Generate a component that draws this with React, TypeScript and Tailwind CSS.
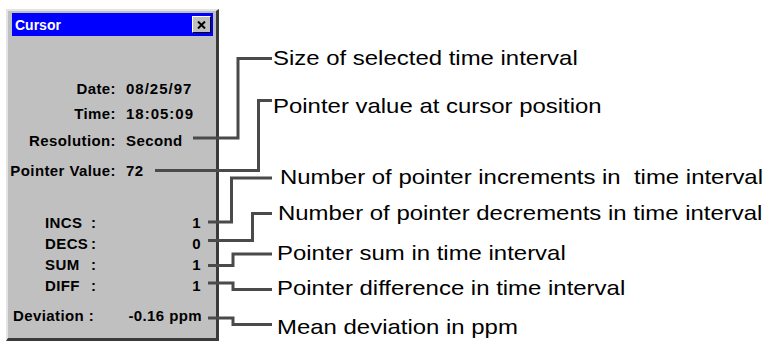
import React from "react";

const ui = { fontFamily: '"Liberation Sans", Arial, sans-serif' };

// connector lines from the window values to the callout texts (page coords)
const LEADERS = [
  "M193 138 H238 V58.5 H272",
  "M155 170.5 H258.5 V100.5 H272",
  "M208 222 H231.5 V178 H272",
  "M208 240.5 H252.5 V213.5 H272",
  "M208 265.5 H233 V254 H272",
  "M208 283 H233 V289.5 H272",
  "M208 318 H233 V324.5 H272",
];

const CALLOUTS = [
  { text: "Size of selected time interval", top: "mt-[48px]", left: "ml-[273px]" },
  { text: "Pointer value at cursor position", top: "mt-[28px]", left: "ml-[273px]" },
  { text: "Number of pointer increments in\u00a0 time interval", top: "mt-[51px]", left: "ml-[280px]" },
  { text: "Number of pointer decrements in time interval", top: "mt-[16px]", left: "ml-[278px]" },
  { text: "Pointer sum in time interval", top: "mt-[20px]", left: "ml-[277px]" },
  { text: "Pointer difference in time interval", top: "mt-[15px]", left: "ml-[277px]" },
  { text: "Mean deviation in ppm", top: "mt-[19px]", left: "ml-[277px]" },
];

const COUNTERS = [
  { label: "INCS", value: "1", top: "mt-[34px]" },
  { label: "DECS", value: "0", top: "mt-[3px]" },
  { label: "SUM", value: "1", top: "mt-[3px]" },
  { label: "DIFF", value: "1", top: "mt-[3px]" },
];

function CloseButton() {
  return (
    <div className="flex h-[17px] w-[19px] items-center justify-center border-t border-l border-t-white border-l-white border-r border-b border-r-black border-b-black bg-[#c0c0c0]">
      <svg width="9" height="8" viewBox="0 0 9 8">
        <path d="M1 0.5 L8 7.5 M8 0.5 L1 7.5" stroke="#000" strokeWidth="2" />
      </svg>
    </div>
  );
}

function CursorWindow() {
  return (
    <div className="ml-[6px] mt-[9px] flex h-[332px] w-[213px] flex-col border-t-2 border-l-2 border-t-[#e4e4e4] border-l-[#e4e4e4] border-r-[3px] border-b-[3px] border-r-[#3a3a3a] border-b-[#3a3a3a] bg-[#c0c0c0] pt-[2px] pl-[4px] pr-[3px]">
      {/* Title bar */}
      <div className="flex h-[23px] items-center justify-between bg-[#0000ff] pl-[3px] pr-[2px]">
        <span className="text-[14px] font-bold leading-none text-white">Cursor</span>
        <CloseButton />
      </div>

      <div className="flex flex-col text-[15px] font-bold leading-[18px] tracking-[0.4px] text-black">
        {/* Date / time block */}
        <div className="mt-[44px] grid grid-cols-[104px_1fr] gap-x-[10px] gap-y-[7px]">
          <span className="text-right">Date:</span>
          <span className="tracking-[1px]">08/25/97</span>
          <span className="text-right">Time:</span>
          <span className="tracking-[1px]">18:05:09</span>
          <span className="mt-[2px] text-right">Resolution:</span>
          <span className="mt-[2px]">Second</span>
          <span className="mt-[5px] -ml-[2px] whitespace-nowrap text-right">Pointer Value:</span>
          <span className="mt-[5px]">72</span>
        </div>

        {/* Counters */}
        {COUNTERS.map((c) => (
          <div key={c.label} className={`${c.top} flex pl-[33px] pr-[12px]`}>
            <span className="w-[46px]">{c.label}</span>
            <span>:</span>
            <span className="flex-1 text-right">{c.value}</span>
          </div>
        ))}

        <div className="mt-[12px] flex pl-[1px] pr-[11px]">
          <span>Deviation :</span>
          <span className="flex-1 text-right">-0.16 ppm</span>
        </div>
      </div>
    </div>
  );
}

export default function App() {
  return (
    <div className="relative flex h-[341px] w-[764px] overflow-hidden bg-white" style={ui}>
      <CursorWindow />

      <div className="absolute left-0 top-0 flex flex-col items-start text-[21px] leading-[20px] text-black">
        {CALLOUTS.map((c) => (
          <span key={c.text} className={`${c.top} ${c.left} origin-left scale-x-[1.14] whitespace-nowrap`}>
            {c.text}
          </span>
        ))}
      </div>

      <svg className="pointer-events-none absolute left-0 top-0" width="764" height="341">
        {LEADERS.map((d) => (
          <path key={d} d={d} fill="none" stroke="#4a4a4a" strokeWidth="3" strokeLinecap="butt" strokeLinejoin="miter" />
        ))}
      </svg>
    </div>
  );
}
